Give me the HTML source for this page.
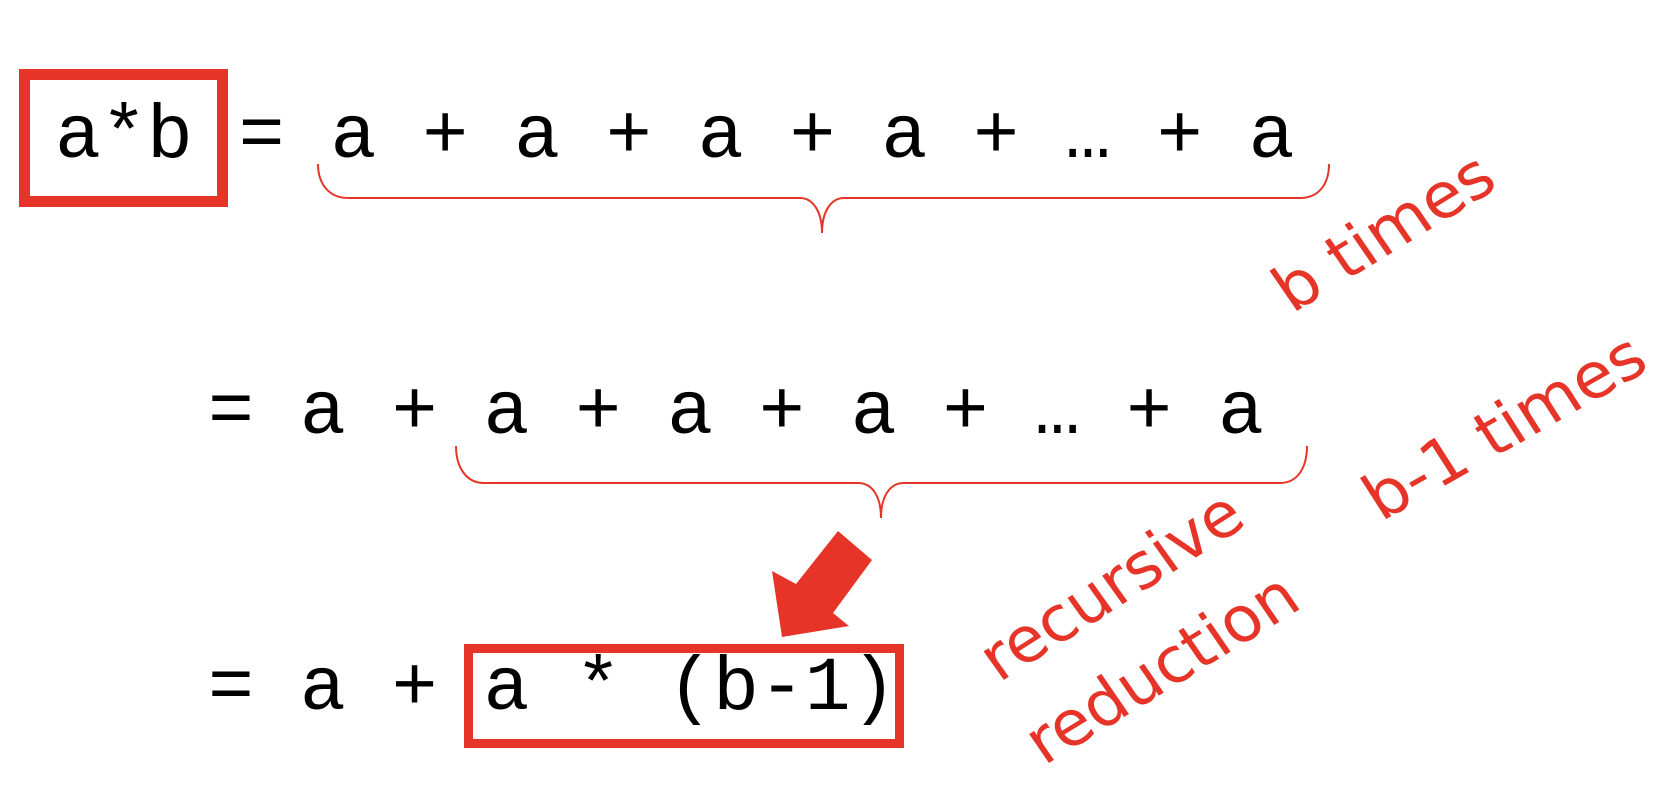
<!DOCTYPE html>
<html><head><meta charset="utf-8"><style>
html,body{margin:0;padding:0;background:#fff;width:1664px;height:798px;overflow:hidden}
svg{display:block}
.m{font-family:"Liberation Mono",monospace;font-size:76.5px;fill:#000;white-space:pre}
.r{font-family:"DejaVu Sans","Liberation Sans",sans-serif;font-size:64px;fill:#e63528}
</style></head><body>
<svg width="1664" height="798" viewBox="0 0 1664 798" xmlns="http://www.w3.org/2000/svg">
<rect x="24.5" y="74.5" width="198" height="127" fill="none" stroke="#e63528" stroke-width="11"/>
<text class="m" x="55" y="157">a*b = a + a + a + a + … + a</text>
<path d="M318 164 C318 185 330 198 348 198 L800 198 C812 198 822 210 822 233 C822 210 832 198 844 198 L1300 198 C1318 198 1329 185 1329 164" fill="none" stroke="#e63528" stroke-width="2"/>
<text class="m" x="208" y="433">= a + a + a + a + … + a</text>
<path d="M456 446 C456 467 466 483 484 483 L858 483 C872 483 881 496 881 518 C881 496 890 483 904 483 L1280 483 C1298 483 1307 467 1307 446" fill="none" stroke="#e63528" stroke-width="2"/>
<polygon points="782,637 772,571 796,584 838,531 872,560 833,613 849,626" fill="#e63528"/>
<text class="m" x="208" y="709">= a + a * (b-1)</text>
<rect x="468.5" y="648.5" width="431" height="95" fill="none" stroke="#e63528" stroke-width="9"/>
<g transform="translate(1292 314) rotate(-31.5) skewX(3)"><text class="r" x="0" y="0" textLength="244" lengthAdjust="spacingAndGlyphs">b times</text></g>
<g transform="translate(1381 522) rotate(-29.6) skewX(3)"><text class="r" x="0" y="0" textLength="311" lengthAdjust="spacingAndGlyphs">b-1 times</text></g>
<g transform="translate(999 683) rotate(-32.5) skewX(3)"><text class="r" x="0" y="0" textLength="296" lengthAdjust="spacingAndGlyphs">recursive</text></g>
<g transform="translate(1044 766) rotate(-31.5) skewX(3)"><text class="r" x="0" y="0" textLength="305" lengthAdjust="spacingAndGlyphs">reduction</text></g>
</svg>
</body></html>
